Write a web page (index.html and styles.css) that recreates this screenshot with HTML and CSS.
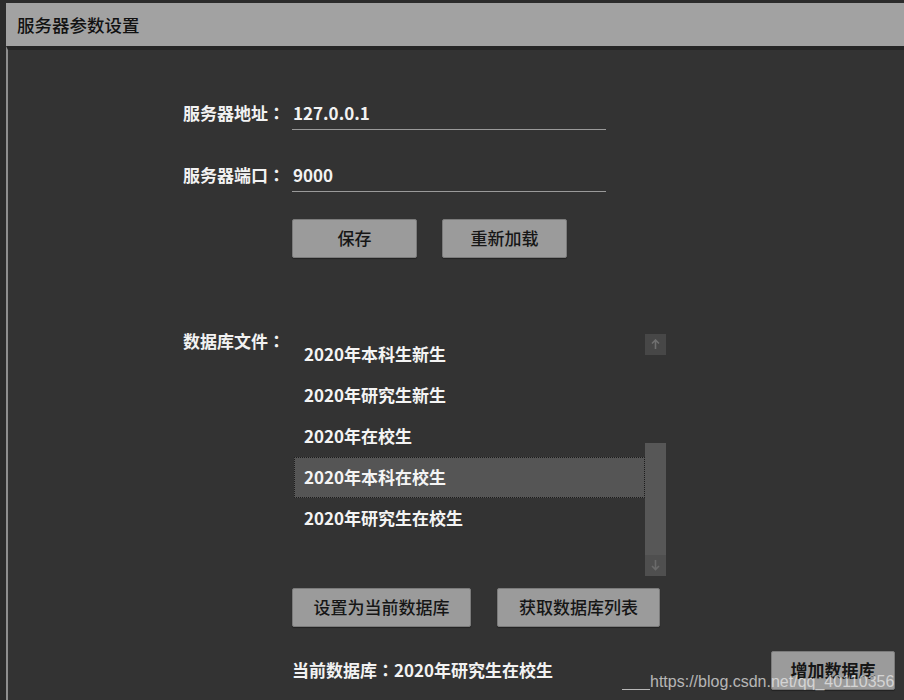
FILE: index.html
```html
<!DOCTYPE html>
<html lang="zh-CN">
<head>
<meta charset="utf-8">
<title>服务器参数设置</title>
<link rel="stylesheet" href="styles.css">
</head>
<body>
<div class="window">
  <div class="titlebar">服务器参数设置</div>
  <div class="content">
    <div class="form">
      <div class="label">服务器地址<span class="colon" lang="zh-TW">：</span></div>
      <div class="field">127.0.0.1</div>

      <div class="label">服务器端口<span class="colon" lang="zh-TW">：</span></div>
      <div class="field">9000</div>

      <div class="spacer"></div>
      <div class="btnrow">
        <button class="btn btn-sm">保存</button>
        <button class="btn btn-sm">重新加载</button>
      </div>

      <div class="label label-top">数据库文件<span class="colon" lang="zh-TW">：</span></div>
      <div class="listbox">
        <ul class="items">
          <li class="item">2020年本科生新生</li>
          <li class="item">2020年研究生新生</li>
          <li class="item">2020年在校生</li>
          <li class="item selected">2020年本科在校生</li>
          <li class="item">2020年研究生在校生</li>
        </ul>
        <div class="scrollbar">
          <div class="sb-btn sb-up"><svg width="9" height="11" viewBox="0 0 9 11"><path d="M4.5 1 L4.5 10 M1 4.5 L4.5 1 L8 4.5" fill="none" stroke="#707070" stroke-width="1.6"/></svg></div>
          <div class="sb-track"></div>
          <div class="sb-thumb"><div class="sb-btn sb-down"><svg width="9" height="11" viewBox="0 0 9 11"><path d="M4.5 0 L4.5 9.5 M1 6 L4.5 9.5 L8 6" fill="none" stroke="#6a6a6a" stroke-width="1.6"/></svg></div></div>
        </div>
      </div>

      <div class="spacer"></div>
      <div class="btnrow btnrow2">
        <button class="btn btn-set">设置为当前数据库</button>
        <button class="btn btn-get">获取数据库列表</button>
      </div>
    </div>

    <div class="footer">
      <div class="current">当前数据库<span class="colon" lang="zh-TW">：</span>2020年研究生在校生</div>
      <button class="btn btn-add">增加数据库</button>
    </div>
  </div>
  <div class="watermark"><span class="wm-line"></span>https://blog.csdn.net/qq_40110356</div>
</div>
</body>
</html>
```

FILE: styles.css
```css
html, body {
  margin: 0;
  padding: 0;
}
body {
  width: 904px;
  height: 700px;
  overflow: hidden;
  background: #2b2b2b;
  font-family: "Noto Sans CJK SC", "Noto Sans", "Liberation Sans", sans-serif;
}
.window {
  position: relative;
  margin: 3px 0 0 6px;
  height: 697px;
  display: flex;
  flex-direction: column;
}
.titlebar {
  height: 43px;
  flex: none;
  background: #a2a2a2;
  display: flex;
  align-items: center;
  padding: 0 0 1px 11px;
  box-sizing: border-box;
  font-size: 17.5px;
  font-weight: 500;
  color: #121212;
}
.content {
  flex: 1;
  background: #333333;
  border-left: 2px solid #8e8e8e;
  border-top: 4px solid #262626;
  display: flex;
  flex-direction: column;
}
.form {
  display: grid;
  grid-template-columns: 109px auto;
  justify-content: start;
  align-items: center;
  padding: 48px 0 0 175px;
}
.label {
  color: #f2f2f2;
  font-size: 17px;
  font-weight: 700;
  line-height: 24px;
  padding-bottom: 2px;
}
.colon {
  font-family: "Noto Sans CJK TC", "Noto Sans CJK SC", sans-serif;
}
.field {
  width: 313px;
  height: 29px;
  line-height: 29px;
  padding: 0 0 2px 1px;
  border-bottom: 1px solid #9a9a9a;
  color: #f2f2f2;
  font-size: 17px;
  font-weight: 700;
  box-sizing: content-box;
}
.field + .label {
  margin-top: 30px;
}
.label + .field + .label + .field {
  margin-top: 30px;
}
.btnrow {
  display: flex;
  gap: 25px;
  margin-top: 27px;
}
.btnrow2 {
  gap: 26px;
  margin-top: 12px;
}
.btn {
  height: 39px;
  background: #9b9b9b;
  border: 1px solid #7b7b7b;
  border-radius: 2px;
  box-shadow: 0 1px 1px rgba(0, 0, 0, 0.35);
  color: #161616;
  font-family: "Noto Sans CJK SC", "Noto Sans", sans-serif;
  font-size: 17px;
  font-weight: 500;
  padding: 0 0 3px 0;
  text-align: center;
}
.btn-sm {
  width: 125px;
}
.btn-set {
  width: 179px;
}
.btn-get {
  width: 163px;
}
.listbox {
  display: flex;
  margin-top: 76px;
  height: 242px;
  padding-left: 2px;
}
.label-top {
  align-self: start;
  line-height: 14px;
  padding-bottom: 0;
  margin-top: 76px;
}
.items {
  list-style: none;
  margin: 0;
  padding: 0;
  width: 351px;
}
.item {
  height: 41px;
  line-height: 37px;
  box-sizing: border-box;
  padding: 0 0 2px 9px;
  border: 1px solid transparent;
  color: #f4f4f4;
  font-size: 17px;
  font-weight: 700;
}
.item.selected {
  background: #555555;
  border: 1px dotted #1c1c1c;
}
.scrollbar {
  width: 21px;
  display: flex;
  flex-direction: column;
}
.sb-btn {
  height: 21px;
  display: flex;
  align-items: center;
  justify-content: center;
}
.sb-up {
  background: #474747;
}
.sb-track {
  height: 88px;
}
.sb-thumb {
  flex: 1;
  background: #575757;
  display: flex;
  flex-direction: column;
  justify-content: flex-end;
}
.sb-down {
  background: #4f4f4f;
}
.footer {
  display: flex;
  align-items: center;
  margin-top: 24px;
  padding: 0 9px 0 284px;
}
.current {
  color: #f2f2f2;
  font-size: 17px;
  font-weight: 700;
  padding-bottom: 2px;
}
.btn-add {
  margin-left: auto;
  width: 124px;
  font-weight: 700;
}
.watermark {
  position: absolute;
  left: 616px;
  top: 669px;
  display: flex;
  align-items: flex-end;
  font-family: "Liberation Sans", Arial, sans-serif;
  font-size: 16px;
  line-height: 20px;
  color: rgba(235, 235, 235, 0.72);
  white-space: nowrap;
}
.wm-line {
  display: inline-block;
  width: 28px;
  height: 1px;
  background: rgba(235, 235, 235, 0.72);
  margin-bottom: 2px;
}
```
